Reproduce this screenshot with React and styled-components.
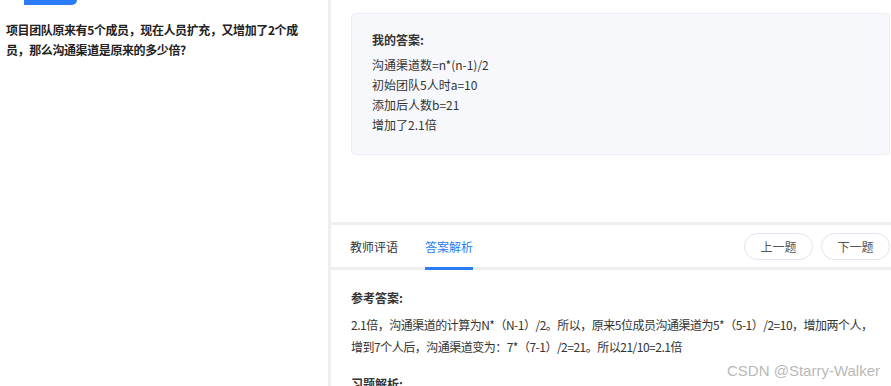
import styled, { createGlobalStyle } from "styled-components";

const Global = createGlobalStyle`
  html, body {
    margin: 0;
    padding: 0;
    height: 386px;
    overflow: hidden;
    background: #efefef;
  }
  body {
    font-family: "Noto Sans CJK SC", "Inter", sans-serif;
    font-size: 12px;
    color: #333;
  }
`;

// ─── layout ──────────────────────────────────────────────────────────────────
const Page = styled.div`
  display: grid;
  grid-template-columns: 328px 1fr;
  column-gap: 3px;
  height: 386px;
  background: #efefef;
  position: relative;
  overflow: hidden;
`;

const LeftPane = styled.aside`
  background: #fff;
  display: flex;
  flex-direction: column;
`;

const StartButton = styled.div`
  margin-left: 24px;
  width: 53px;
  height: 5px;
  background: #2b7cf6;
  border-radius: 0 0 12px 0;
`;

const Question = styled.p`
  margin: 15px 0 0;
  padding: 0 0 0 6px;
  width: 298px;
  font-weight: 700;
  line-height: 20px;
  letter-spacing: -0.4px;
  color: #222;
`;

const RightPane = styled.main`
  display: flex;
  flex-direction: column;
  gap: 3px;
`;

const Section = styled.section`
  background: #fff;
  padding: ${({ $pad }) => $pad || "0"};
  height: ${({ $h }) => ($h ? `${$h}px` : "auto")};
  flex: ${({ $grow }) => ($grow ? 1 : "none")};
  box-sizing: border-box;
`;

// ─── answer card ─────────────────────────────────────────────────────────────
const Card = styled.div`
  margin: 13px 1px 0 20px;
  height: 142px;
  box-sizing: border-box;
  padding: 16px 20px 0;
  background: #f7f8fc;
  border: 1px solid #eceef4;
  border-radius: 4px;
`;

const Title = styled.div`
  font-weight: 700;
  line-height: 20px;
  color: #333;
`;

const Lines = styled.div`
  margin-top: 5px;
  line-height: 20px;
  color: #333;
`;

// ─── tabs ────────────────────────────────────────────────────────────────────
const TabBar = styled.div`
  height: 42px;
  background: #fff;
  display: flex;
  align-items: center;
  padding: 0 1px 0 19px;
`;

const Tabs = styled.div`
  display: flex;
  gap: 27px;
  height: 100%;
`;

const Tab = styled.div`
  position: relative;
  display: flex;
  align-items: center;
  color: ${({ $active }) => ($active ? "#2b7cf6" : "#333")};
  &::after {
    content: "";
    display: ${({ $active }) => ($active ? "block" : "none")};
    position: absolute;
    left: 0;
    right: 0;
    bottom: -3px;
    height: 3px;
    background: #2b7cf6;
  }
`;

const NavGroup = styled.div`
  margin-left: auto;
  display: flex;
  gap: 8px;
`;

const NavBtn = styled.button`
  width: 69px;
  height: 27px;
  border: 1px solid #e0e4ee;
  border-radius: 14px;
  background: #fff;
  color: #555;
  font-family: inherit;
  font-size: 12px;
  padding: 0;
  cursor: pointer;
`;

// ─── analysis ────────────────────────────────────────────────────────────────
const Body = styled.div`
  margin-top: 6px;
  line-height: 22px;
  letter-spacing: -0.5px;
  color: #333;
`;

const NextTitle = styled(Title)`
  margin-top: 16px;
`;

const Watermark = styled.div`
  position: absolute;
  left: 727px;
  top: 362px;
  font-family: "Liberation Sans", Arial, sans-serif;
  font-size: 15px;
  color: #b9b9b9;
  text-shadow: 0 0 2px #fff;
  white-space: nowrap;
`;

const MY_ANSWER = [
  "沟通渠道数=n*(n-1)/2",
  "初始团队5人时a=10",
  "添加后人数b=21",
  "增加了2.1倍",
];

export default function App() {
  return (
    <>
      <Global />
      <Page>
        <LeftPane>
          <StartButton />
          <Question>
            项目团队原来有5个成员，现在人员扩充，又增加了2个成员，那么沟通渠道是原来的多少倍?
          </Question>
        </LeftPane>

        <RightPane>
          <Section $h={222}>
            <Card>
              <Title>我的答案:</Title>
              <Lines>
                {MY_ANSWER.map((l) => (
                  <div key={l}>{l}</div>
                ))}
              </Lines>
            </Card>
          </Section>

          <TabBar>
            <Tabs>
              <Tab>教师评语</Tab>
              <Tab $active>答案解析</Tab>
            </Tabs>
            <NavGroup>
              <NavBtn>上一题</NavBtn>
              <NavBtn>下一题</NavBtn>
            </NavGroup>
          </TabBar>

          <Section $grow $pad="18px 12px 0 20px">
            <Title>参考答案:</Title>
            <Body>
              2.1倍，沟通渠道的计算为N*（N-1）/2。所以，原来5位成员沟通渠道为5*（5-1）/2=10，增加两个人，增到7个人后，沟通渠道变为：7*（7-1）/2=21。所以21/10=2.1倍
            </Body>
            <NextTitle>习题解析:</NextTitle>
          </Section>
        </RightPane>

        <Watermark>CSDN @Starry-Walker</Watermark>
      </Page>
    </>
  );
}
